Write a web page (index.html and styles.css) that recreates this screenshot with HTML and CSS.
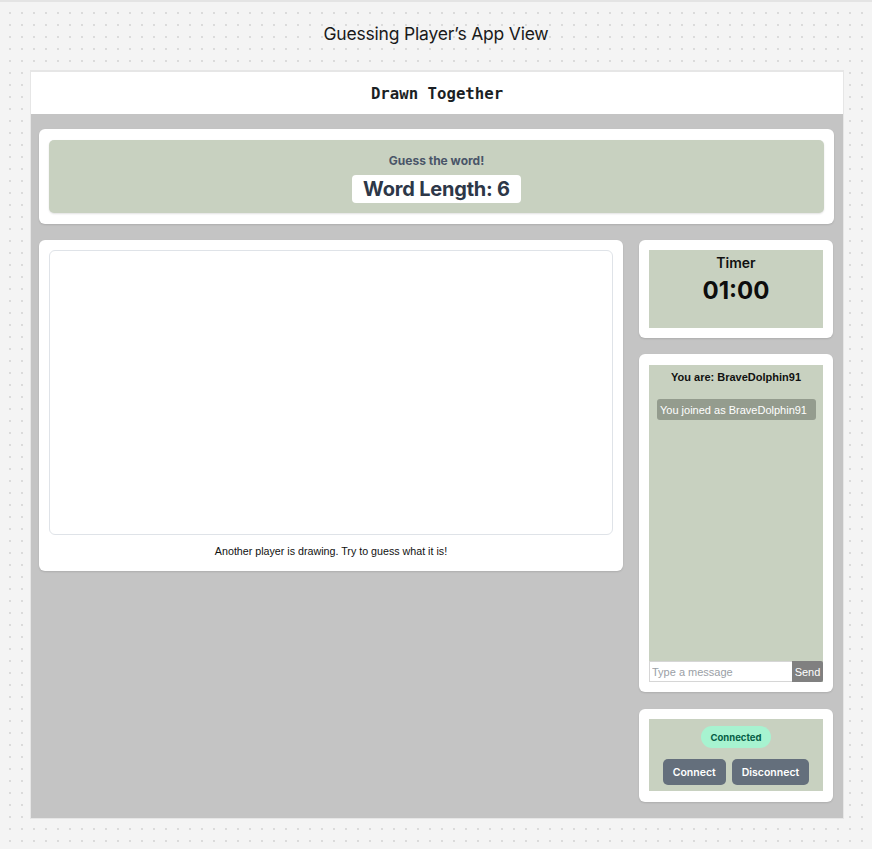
FILE: index.html
```html
<!DOCTYPE html>
<html>
<head>
<meta charset="utf-8">
<title>Guessing Player's App View</title>
<link rel="stylesheet" href="styles.css">
</head>
<body>
<div class="page">
  <h1 class="page-title">Guessing Player’s App View</h1>
  <div class="frame">
    <header class="app-header">Drawn Together</header>
    <main class="app-body">
      <section class="card word-card">
        <div class="word-inner">
          <div class="guess-label">Guess the word!</div>
          <div class="word-pill">Word Length: 6</div>
        </div>
      </section>
      <div class="main-row">
        <section class="card canvas-card">
          <div class="canvas-box"></div>
          <p class="canvas-caption">Another player is drawing. Try to guess what it is!</p>
        </section>
        <aside class="side-col">
          <section class="card side-card">
            <div class="green timer-inner">
              <div class="timer-label">Timer</div>
              <div class="timer-value">01:00</div>
            </div>
          </section>
          <section class="card side-card">
            <div class="green chat-inner">
              <div class="chat-title">You are: BraveDolphin91</div>
              <div class="chat-messages">
                <div class="chat-msg">You joined as BraveDolphin91</div>
              </div>
              <div class="chat-input-row">
                <input class="chat-input" type="text" placeholder="Type a message">
                <button class="chat-send">Send</button>
              </div>
            </div>
          </section>
          <section class="card side-card status-card">
            <div class="green status-inner">
              <div class="status-pill">Connected</div>
              <div class="status-buttons">
                <button class="btn">Connect</button>
                <button class="btn">Disconnect</button>
              </div>
            </div>
          </section>
        </aside>
      </div>
    </main>
  </div>
</div>
</body>
</html>
```
FILE: styles.css
```css
* { box-sizing: border-box; }
html, body { margin: 0; padding: 0; }
body {
  width: 872px;
  height: 849px;
  background-color: #f4f4f4;
  background-image: radial-gradient(circle at 1px 1px, #d2d2d2 0.6px, transparent 1px);
  background-size: 12px 12px;
  background-position: 9px 12px;
  font-family: Inter, "Noto Sans", sans-serif;
  overflow: hidden;
}
.page {
  border-top: 2px solid #e4e4e4;
  padding-top: 21px;
}
.page-title {
  margin: 0;
  text-align: center;
  font-size: 17.5px;
  font-weight: 400;
  line-height: 22px;
  color: #1a1a1a;
  letter-spacing: -0.2px;
}
.frame {
  margin: 25px 0 0 30px;
  width: 814px;
  border: 1px solid #e6e6e6;
  border-top-width: 2px;
  border-right-width: 1px;
  background: #fff;
}
.app-header {
  height: 42px;
  display: flex;
  align-items: center;
  justify-content: center;
  font-family: "DejaVu Sans Mono", "Liberation Mono", monospace;
  font-weight: 700;
  font-size: 15.7px;
  color: #1b1f24;
}
.app-body {
  background: #c4c4c4;
  height: 704px;
  padding: 15px 9px 16px 8px;
}
.card {
  background: #fff;
  border-radius: 6px;
  box-shadow: 0 1px 2px rgba(0,0,0,0.12);
}
.word-card {
  padding: 11px 10px;
  height: 95px;
}
.word-inner {
  background: #c8d1c0;
  border-radius: 5px;
  height: 73px;
  display: flex;
  flex-direction: column;
  align-items: center;
  padding-top: 13px;
  box-shadow: 0 1px 2px rgba(0,0,0,0.12);
}
.guess-label {
  font-size: 12px;
  font-weight: 700;
  color: #4a5568;
  line-height: 15px;
}
.word-pill {
  margin-top: 7px;
  background: #fff;
  border-radius: 4px;
  height: 28px;
  padding: 0 11px;
  display: flex;
  align-items: center;
  font-size: 20px;
  font-weight: 700;
  color: #2d3748;
  letter-spacing: -0.2px;
}
.main-row {
  display: flex;
  gap: 16px;
  margin-top: 16px;
  align-items: flex-start;
}
.canvas-card {
  width: 584px;
  padding: 10px 10px 0;
  height: 331px;
}
.canvas-box {
  height: 285px;
  border: 1px solid #dfe3e8;
  border-radius: 6px;
  background: #fff;
}
.canvas-caption {
  margin: 0;
  text-align: center;
  font-family: "Liberation Sans", Arial, sans-serif;
  font-size: 10.7px;
  line-height: 32px;
  color: #111;
}
.side-col {
  width: 194px;
  display: flex;
  flex-direction: column;
  gap: 16px;
}
.side-card {
  padding: 10px;
}
.status-card {
  margin-top: 1px;
  padding-bottom: 11px;
}
.green {
  background: #c8d1c0;
}
.timer-inner {
  height: 78px;
  display: flex;
  flex-direction: column;
  align-items: center;
  padding-top: 4px;
}
.timer-label {
  font-size: 14px;
  font-weight: 600;
  line-height: 18px;
  color: #111;
}
.timer-value {
  font-size: 24px;
  font-weight: 700;
  line-height: 30px;
  margin-top: 4px;
  color: #0d0d0d;
}
.chat-inner {
  height: 317px;
  margin-top: 1px;
  display: flex;
  flex-direction: column;
}
.chat-title {
  text-align: center;
  font-family: "Liberation Sans", Arial, sans-serif;
  font-weight: 700;
  font-size: 11px;
  line-height: 14px;
  padding-top: 5px;
  color: #111;
}
.chat-messages {
  flex: 1;
  padding: 15px 7px 0 8px;
}
.chat-msg {
  background: #949c8e;
  color: #fff;
  border-radius: 3px;
  height: 21px;
  padding: 0 3px;
  display: flex;
  align-items: center;
  font-family: "Liberation Sans", Arial, sans-serif;
  font-size: 11px;
}
.chat-input-row {
  display: flex;
  height: 21px;
}
.chat-input {
  flex: 1;
  min-width: 0;
  height: 21px;
  border: 1px solid #d6d6d6;
  border-right: none;
  background: #fff;
  padding: 0 2px;
  font-family: "Liberation Sans", Arial, sans-serif;
  font-size: 11px;
  outline: none;
}
.chat-input::placeholder { color: #9aa0a6; }
.chat-send {
  width: 31px;
  height: 21px;
  border: none;
  background: #808080;
  color: #fff;
  border-radius: 0 2px 2px 0;
  font-family: "Liberation Sans", Arial, sans-serif;
  font-size: 11px;
  padding: 0;
}
.status-inner {
  height: 72px;
  display: flex;
  flex-direction: column;
  align-items: center;
  padding-top: 7px;
}
.status-pill {
  background: #a7f3d0;
  color: #065f46;
  border-radius: 11px;
  height: 22px;
  padding: 0 10px;
  display: flex;
  align-items: center;
  font-size: 9.5px;
  font-weight: 700;
}
.status-buttons {
  display: flex;
  gap: 6px;
  margin-top: 11px;
}
.btn {
  height: 26px;
  border: none;
  border-radius: 5px;
  background: #646f7c;
  color: #fff;
  font-family: Inter, sans-serif;
  font-weight: 600;
  font-size: 10.5px;
  padding: 0 10px;
}
```
